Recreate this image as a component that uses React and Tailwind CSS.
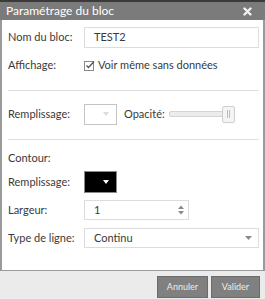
export default function App() {
  const label = "w-[76px] shrink-0 text-[11px] text-[#3a3a3a]";
  return (
    <div className="w-[265px] h-[299px] flex flex-col bg-[#ebebeb] font-['Lato',sans-serif]">
      <div className="h-[20px] shrink-0 border-t-2 border-[#3a3a3a] bg-[#7b7b7b] flex items-center justify-between pl-[6px] pr-[13px]">
        <span className="text-[12px] text-white leading-none">Paramétrage du bloc</span>
        <svg width="9" height="9" viewBox="0 0 9 9">
          <path d="M1.5 1.5 L7.5 7.5 M7.5 1.5 L1.5 7.5" stroke="#f2f2f2" strokeWidth="2.4" strokeLinecap="round" />
        </svg>
      </div>
      <div className="h-[251px] shrink-0 bg-white border-x-2 border-b border-[#9a9a9a] pl-[6px] pr-[4px] pt-[7px] flex flex-col">
        <div className="h-[21px] flex items-center">
          <span className={label}>Nom du bloc:</span>
          <div className="flex-1 h-full border border-[#dcdcdc] flex items-center pl-[9px] text-[11px] text-[#3a3a3a]">TEST2</div>
        </div>
        <div className="h-[20px] mt-[7px] flex items-center">
          <span className={label}>Affichage:</span>
          <svg width="11" height="11" viewBox="0 0 11 11" className="mr-[3px]">
            <rect x="0.5" y="1.5" width="9" height="9" fill="white" stroke="#8a8a8a" />
            <path d="M2.5 5.5 L4.5 7.5 L10 1.5" fill="none" stroke="#555" strokeWidth="1.3" />
          </svg>
          <span className="text-[11px] text-[#3a3a3a]">Voir même sans données</span>
        </div>
        <div className="h-px bg-[#dedede] mt-[15px]" />
        <div className="h-[20px] mt-[13px] flex items-center">
          <span className={label}>Remplissage:</span>
          <div className="w-[33px] h-[21px] border border-[#c4c4c4] bg-white flex items-center justify-end pr-[7px]">
            <svg width="6" height="4" viewBox="0 0 6 4"><path d="M0 0 L6 0 L3 4 Z" fill="#dcdcdc" /></svg>
          </div>
          <span className="text-[11px] text-[#3a3a3a] ml-[7px]">Opacité:</span>
          <div className="ml-[4px] flex items-center">
            <div className="w-[56px] h-[6px] rounded-[2px] border border-[#d4d4d4] bg-[#ececec]" />
            <div className="-ml-[3px] w-[13px] h-[17px] rounded-[2px] border border-[#cfcfcf] bg-[#f4f4f4] flex items-center justify-center gap-[1px]">
              <div className="w-px h-[8px] bg-[#bdbdbd]" />
              <div className="w-px h-[8px] bg-[#bdbdbd]" />
            </div>
          </div>
        </div>
        <div className="h-px bg-[#dedede] mt-[15px]" />
        <div className="h-[16px] mt-[10px] flex items-center">
          <span className={label}>Contour:</span>
        </div>
        <div className="h-[22px] mt-[5px] flex items-center">
          <span className={label}>Remplissage:</span>
          <div className="w-[33px] h-[22px] border border-[#8a8a8a] bg-black flex items-center justify-end pr-[7px]">
            <svg width="6" height="4" viewBox="0 0 6 4"><path d="M0 0 L6 0 L3 4 Z" fill="#ffffff" /></svg>
          </div>
        </div>
        <div className="h-[20px] mt-[7px] flex items-center">
          <span className={label}>Largeur:</span>
          <div className="w-[105px] h-full border border-[#dcdcdc] flex items-center justify-between pl-[9px] pr-[4px]">
            <span className="text-[11px] text-[#3a3a3a]">1</span>
            <svg width="6" height="10" viewBox="0 0 6 10">
              <path d="M0 4 L6 4 L3 0.5 Z" fill="#8a8a8a" />
              <path d="M0 6 L6 6 L3 9.5 Z" fill="#8a8a8a" />
            </svg>
          </div>
        </div>
        <div className="h-[20px] mt-[8px] flex items-center">
          <span className={label}>Type de ligne:</span>
          <div className="flex-1 h-full border border-[#dcdcdc] flex items-center justify-between pl-[9px] pr-[6px]">
            <span className="text-[11px] text-[#3a3a3a]">Continu</span>
            <svg width="7" height="4" viewBox="0 0 7 4"><path d="M0 0 L7 0 L3.5 4 Z" fill="#8a8a8a" /></svg>
          </div>
        </div>
      </div>
      <div className="flex-1 flex justify-end items-start gap-[3px] pt-[5px] pr-[5px]">
        <button className="w-[51px] h-[22px] bg-[#808080] border border-[#6c6c6c] text-[9px] text-[#ececec]">Annuler</button>
        <button className="w-[49px] h-[22px] bg-[#808080] border border-[#6c6c6c] text-[9px] text-[#ececec]">Valider</button>
      </div>
    </div>
  );
}
